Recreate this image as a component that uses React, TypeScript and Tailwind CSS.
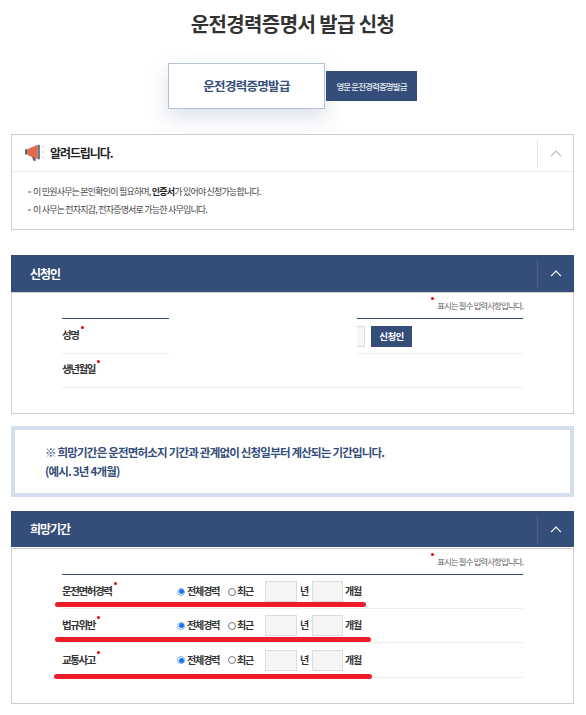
import React from "react";

const font = { fontFamily: '"Noto Sans CJK KR", "Noto Sans", sans-serif' };

function Dot({ className }: { className: string }) {
  return <span className={"absolute h-[3px] w-[3px] rounded-full bg-[#f00000] " + className} />;
}

function Chevron({ color }: { color: string }) {
  return (
    <svg width="12" height="7" viewBox="0 0 12 7" fill="none">
      <path d="M1 6.2 6 1.2l5 5" stroke={color} strokeWidth="1.2" />
    </svg>
  );
}

function Megaphone() {
  return (
    <svg width="20" height="20" viewBox="0 0 22 20">
      <path d="M7 12.5h3.5l1.6 6H9.2z" fill="#5a6472" />
      <rect x="0" y="5.5" width="3" height="6.5" rx="1.5" fill="#5a6472" />
      <path d="M3 5.5 14 1v16L3 12.5z" fill="#e2694c" />
      <path d="M14 1h2.4v16H14z" fill="#6b7482" />
      <path d="M18.5 3.5l2-1.5M19 9h2.6M18.5 14l2 1.5" stroke="#aab0b8" strokeWidth="1" strokeDasharray="1.2 .8" />
    </svg>
  );
}

function Note() {
  return (
    <div className="relative flex h-[25px] items-end justify-end pb-[6px] pr-[50px] text-[8.5px] tracking-[-0.95px] text-[#666]">
      <span className="relative leading-[13px]">
        <Dot className="left-[-6px] top-[-2px]" />
        표시는 필수 입력사항입니다.
      </span>
    </div>
  );
}

function SectionHead({ title, h }: { title: string; h: string }) {
  return (
    <div className={"flex items-center justify-between bg-[#344d79] " + h}>
      <h2 className="pl-[19px] text-[12px] font-bold tracking-[-1px] text-white">{title}</h2>
      <div className="flex h-[28px] w-[37px] items-center justify-center border-l border-[#4a6088]">
        <Chevron color="#ffffff" />
      </div>
    </div>
  );
}

function Label({ text, dot }: { text: string; dot: string }) {
  return (
    <span className="relative text-[10.5px] font-bold tracking-[-1.4px] text-[#333]">
      {text}
      <Dot className={dot} />
    </span>
  );
}

function Radio({ checked }: { checked?: boolean }) {
  return checked ? (
    <span className="flex h-[8px] w-[8px] items-center justify-center rounded-full border border-[#7aaef5] bg-white">
      <span className="h-[5px] w-[5px] rounded-full bg-[#1a73e8]" />
    </span>
  ) : (
    <span className="h-[8px] w-[8px] rounded-full border border-[#777] bg-white" />
  );
}

function PeriodRow({
  label,
  h,
  redWidth,
  redLeft,
  redBottom,
}: {
  label: string;
  h: string;
  redWidth: string;
  redLeft: string;
  redBottom: string;
}) {
  const t = "pb-[2px] text-[10px] font-bold tracking-[-1.1px] text-[#333]";
  const box = "h-[21px] border border-[#dcdcdc] bg-[#f5f5f5]";
  return (
    <div className={"relative flex items-center border-b border-[#eeeeee] " + h}>
      <div className="w-[115px] pb-[7px]">
        <Label text={label} dot="right-[-5px] top-[-1px]" />
      </div>
      <Radio checked />
      <span className={"ml-[2px] w-[41px] " + t}>전체경력</span>
      <Radio />
      <span className={"ml-[1px] w-[28px] " + t}>최근</span>
      <span className={"w-[32px] " + box} />
      <span className={"ml-[3px] w-[12px] " + t}>년</span>
      <span className={"w-[31px] " + box} />
      <span className={"ml-[2px] " + t}>개월</span>
      <span className={"absolute h-[5px] rounded-full bg-[#ef1c2a] " + redWidth + " " + redLeft + " " + redBottom} />
    </div>
  );
}

export default function App() {
  return (
    <div className="h-[715px] w-[586px] overflow-hidden bg-white" style={font}>
      <h1 className="flex h-[48px] items-center justify-center pr-[1px] text-[20px] font-bold tracking-[-0.6px] text-[#333]">
        운전경력증명서 발급 신청
      </h1>

      <div className="mt-[15px] flex h-[46px] items-center pl-[168px]">
        <div className="flex h-[46px] w-[157px] items-center justify-center border border-[#b4c0dc] bg-white text-[12.5px] font-bold tracking-[-0.7px] text-[#344d79] shadow-[0_8px_20px_rgba(52,77,121,0.18)]">
          운전경력증명발급
        </div>
        <div className="ml-[1px] flex h-[30px] w-[91px] items-center justify-center bg-[#344d79] text-[8.5px] font-medium tracking-[-0.9px] text-[#e4e8f0]">
          영문 운전경력증명발급
        </div>
      </div>

      <section className="ml-[11px] mt-[25px] h-[96px] w-[563px] border border-[#cfcfcf]">
        <div className="flex h-[37px] items-center justify-between border-b border-[#ececec]">
          <div className="flex items-center gap-[5px] pl-[13px]">
            <Megaphone />
            <span className="text-[12px] font-bold tracking-[-1.1px] text-[#222]">알려드립니다.</span>
          </div>
          <div className="flex h-[28px] w-[36px] items-center justify-center border-l border-[#e8e8e8]">
            <Chevron color="#b5b5b5" />
          </div>
        </div>
        <ul className="pl-[16px] pt-[11px] text-[9px] tracking-[-0.8px] text-[#444]">
          <li className="flex h-[18px] items-center gap-[2px]">
            <span className="h-[2px] w-[3px] bg-[#aaa]" />
            <span>
              이 민원사무는 본인확인이 필요하며, <b className="text-[#222]">인증서</b>가 있어야 신청가능합니다.
            </span>
          </li>
          <li className="flex h-[18px] items-center gap-[2px]">
            <span className="h-[2px] w-[3px] bg-[#aaa]" />
            <span>이 사무는 전자지갑, 전자증명서로 가능한 사무입니다.</span>
          </li>
        </ul>
      </section>

      <section className="ml-[11px] mt-[25px] w-[563px]">
        <SectionHead title="신청인" h="h-[37px]" />
        <div className="h-[122px] border border-[#cfcfcf]">
          <Note />
          <div className="mx-[50px]">
            <div className="flex h-[36px]">
              <div className="flex h-full w-[107px] items-center border-y border-b-[#eeeeee] border-t-[#344d79] pb-[3px]">
                <Label text="성명" dot="right-[-5px] top-[-1px]" />
              </div>
              <div className="ml-[188px] flex h-full w-[166px] items-center border-y border-b-[#eeeeee] border-t-[#344d79]">
                <span className="h-[21px] w-[8px] border border-l-0 border-[#dcdcdc] bg-[#f5f5f5]" />
                <span className="ml-[6px] flex h-[21px] w-[41px] items-center justify-center bg-[#344d79] text-[9.5px] font-bold tracking-[-0.6px] text-white">
                  신청인
                </span>
              </div>
            </div>
            <div className="flex h-[34px] items-center border-b border-[#eeeeee] pb-[3px]">
              <Label text="생년월일" dot="right-[-5px] top-[-1px]" />
            </div>
          </div>
        </div>
      </section>

      <section className="ml-[11px] mt-[12px] flex h-[71px] w-[563px] flex-col justify-center border-[4px] border-[#d5deee] pl-[30px] text-[11.5px] font-bold leading-[19px] tracking-[-0.8px] text-[#344d79]">
        <p>※ 희망기간은 운전면허소지 기간과 관계없이 신청일부터 계산되는 기간입니다.</p>
        <p>(예시. 3년 4개월)</p>
      </section>

      <section className="ml-[11px] mt-[14px] w-[563px]">
        <SectionHead title="희망기간" h="h-[36px]" />
        <div className="mt-[1px] h-[156px] border border-[#cfcfcf]">
          <Note />
          <div className="mx-[50px] border-t border-[#344d79]">
            <PeriodRow label="운전면허경력" h="h-[34px]" redWidth="w-[311px]" redLeft="left-[-7px]" redBottom="bottom-[1px]" />
            <PeriodRow label="법규위반" h="h-[34px]" redWidth="w-[316px]" redLeft="left-[-7px]" redBottom="bottom-[0px]" />
            <PeriodRow label="교통사고" h="h-[35px]" redWidth="w-[318px]" redLeft="left-[-8px]" redBottom="bottom-[-2px]" />
          </div>
        </div>
      </section>
    </div>
  );
}
